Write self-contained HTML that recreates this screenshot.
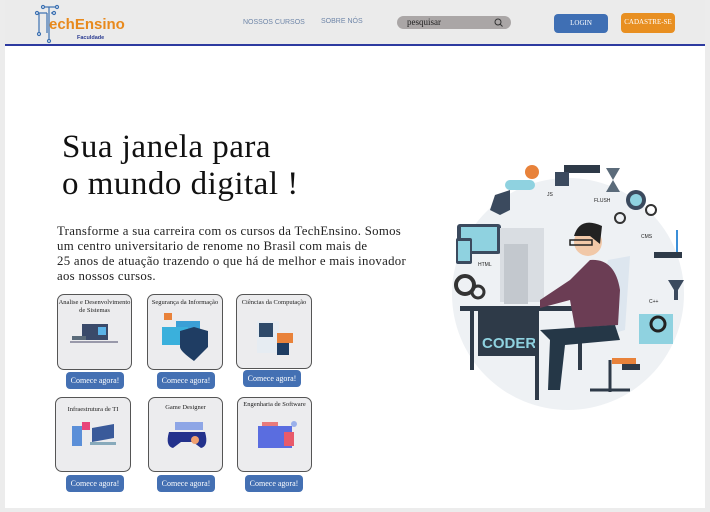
<!DOCTYPE html>
<html><head><meta charset="utf-8"><style>
*{margin:0;padding:0;box-sizing:border-box}
body{width:710px;height:512px;background:#ececec;position:relative;overflow:hidden;font-family:"Liberation Serif",serif}
.page{position:absolute;left:5px;top:0;width:700px;height:508px;background:#fff}
.hdr{position:absolute;left:5px;top:0;width:700px;height:46px;background:#ebebeb;border-bottom:2px solid #2d3aa0}
.abs{position:absolute}
.nav{font-size:7px;color:#6f86a8;font-family:"Liberation Sans",sans-serif}
.search{left:397px;top:16px;width:114px;height:13px;background:#aaa6a6;border-radius:7px;font-size:9px;padding-left:10px;line-height:13px;color:#222}
.btn{background:#3f6fb4;color:#fff;border-radius:4px;text-align:center;font-size:7px}
.title{left:62px;top:129px;font-size:33px;line-height:37px;color:#111;letter-spacing:0.5px}
.para{left:57px;top:224px;font-size:12.8px;line-height:15px;color:#222;white-space:nowrap;letter-spacing:0.3px}
.card{position:absolute;border:1px solid #555;border-radius:7px;background:#ececee;font-size:6.5px;text-align:center;color:#222;padding-top:4px;line-height:8px}
.cb{position:absolute;background:#4470b3;color:#fff;font-size:8px;border-radius:4px;text-align:center;line-height:17px;height:17px;width:58px}
</style></head><body>
<div class="page"></div>
<div class="hdr"></div>
<svg class="abs" style="left:33px;top:3px" width="34" height="42" viewBox="0 0 30 42">
<g stroke="#3a6fb0" stroke-width="1.2" fill="#fff">
<line x1="8" y1="4" x2="22" y2="4"/><line x1="14" y1="4" x2="14" y2="38"/><line x1="2" y1="10" x2="12" y2="10"/><line x1="12" y1="10" x2="12" y2="30"/><line x1="16" y1="10" x2="18" y2="10"/><line x1="4" y1="10" x2="4" y2="30"/>
<circle cx="8" cy="4" r="1.5"/><circle cx="22" cy="4" r="1.5"/><circle cx="2" cy="10" r="1.5"/><circle cx="19" cy="10" r="1.5"/><circle cx="4" cy="31" r="1.5"/><circle cx="14" cy="38" r="1.5"/></g></svg>
<div class="abs" style="left:49px;top:16px;font:bold 15px 'Liberation Sans',sans-serif;color:#e8891c">echEnsino</div>
<div class="abs" style="left:77px;top:35px;font:bold 5.5px 'Liberation Sans',sans-serif;color:#2a3a90">Faculdade</div>
<div class="abs nav" style="left:243px;top:19px">NOSSOS CURSOS</div>
<div class="abs nav" style="left:321px;top:18px">SOBRE NÓS</div>
<div class="abs search">pesquisar<svg style="position:absolute;right:8px;top:2px" width="9" height="9"><circle cx="4" cy="4" r="3" fill="none" stroke="#333"/><line x1="6" y1="6" x2="8.5" y2="8.5" stroke="#333"/></svg></div>
<div class="abs btn" style="left:554px;top:14px;width:54px;height:19px;line-height:19px">LOGIN</div>
<div class="abs btn" style="left:621px;top:13px;width:54px;height:20px;line-height:18px;background:#e88f21">CADASTRE-SE</div>
<div class="abs title">Sua janela para<br>o mundo digital !</div>
<div class="abs para">Transforme a sua carreira com os cursos da TechEnsino. Somos<br>um centro universitario de renome no Brasil com mais de<br>25 anos de atuação trazendo o que há de melhor e mais inovador<br>aos nossos cursos.</div>

<div class="card" style="left:57px;top:294px;width:75px;height:76px">Analise e Desenvolvimento<br>de Sistemas
<svg style="position:absolute;left:12px;top:28px" width="50" height="22"><rect x="12" y="1" width="26" height="16" fill="#3a4a6a"/><rect x="28" y="4" width="8" height="8" fill="#5ab3e8"/><rect x="2" y="13" width="14" height="4" fill="#5b6b7a"/><rect x="0" y="18" width="48" height="2" fill="#99a"/></svg></div>
<div class="cb" style="left:66px;top:372px">Comece agora!</div>
<div class="card" style="left:147px;top:294px;width:76px;height:76px">Segurança da Informação
<svg style="position:absolute;left:12px;top:14px" width="52" height="56"><rect x="16" y="12" width="24" height="14" fill="#3b9fd6"/><rect x="2" y="18" width="26" height="18" fill="#3ab0dc"/><path d="M20 22 L34 18 L48 22 L48 38 Q34 52 34 52 Q20 42 20 38 Z" fill="#1f3d63"/><rect x="4" y="4" width="8" height="7" fill="#e9823a"/></svg></div>
<div class="cb" style="left:157px;top:372px">Comece agora!</div>
<div class="card" style="left:236px;top:294px;width:76px;height:75px">Ciências da Computação
<svg style="position:absolute;left:16px;top:22px" width="46" height="42"><rect x="4" y="4" width="22" height="32" fill="#e6ecf2"/><rect x="6" y="6" width="14" height="14" fill="#2e4a6a"/><rect x="24" y="16" width="16" height="10" fill="#e9823a"/><rect x="24" y="26" width="12" height="12" fill="#1f3d63"/></svg></div>
<div class="cb" style="left:243px;top:370px">Comece agora!</div>
<div class="card" style="left:55px;top:397px;width:76px;height:75px;padding-top:8px">Infraestrutura de TI
<svg style="position:absolute;left:14px;top:22px" width="48" height="28"><rect x="2" y="6" width="10" height="20" fill="#5b8fd8"/><rect x="12" y="2" width="8" height="8" fill="#e8457a"/><path d="M22 8 L44 4 L44 18 L22 22Z" fill="#3a5a9a"/><rect x="20" y="22" width="26" height="3" fill="#8ab"/></svg></div>
<div class="cb" style="left:66px;top:475px">Comece agora!</div>
<div class="card" style="left:148px;top:397px;width:75px;height:75px;padding-top:6px">Game Designer
<svg style="position:absolute;left:16px;top:24px" width="44" height="28"><rect x="10" y="0" width="28" height="8" fill="#8ea6e6"/><path d="M4 10 H40 Q44 24 36 26 L28 20 H16 L8 26 Q0 24 4 10Z" fill="#23318c"/><circle cx="30" cy="18" r="4" fill="#f0a070"/></svg></div>
<div class="cb" style="left:157px;top:475px">Comece agora!</div>
<div class="card" style="left:237px;top:397px;width:75px;height:75px;padding-top:3px">Engenharia de Software
<svg style="position:absolute;left:16px;top:22px" width="46" height="32"><rect x="4" y="6" width="34" height="22" fill="#5a6de0"/><rect x="30" y="12" width="10" height="14" fill="#e85a6a"/><rect x="8" y="2" width="16" height="4" fill="#e87a7a"/><circle cx="40" cy="4" r="3" fill="#9ab0ea"/></svg></div>
<div class="cb" style="left:245px;top:475px">Comece agora!</div>

<svg class="abs" style="left:440px;top:160px" width="260" height="250" viewBox="0 0 260 250">
<circle cx="128" cy="134" r="116" fill="#eef1f4"/>
<rect x="17" y="64" width="44" height="30" rx="3" fill="#3b4a5e"/><rect x="21" y="67" width="36" height="24" fill="#8fd2e0"/>
<rect x="16" y="78" width="16" height="26" rx="2" fill="#3b4a5e"/><rect x="18" y="81" width="12" height="20" fill="#8fd2e0"/>
<circle cx="25" cy="125" r="9" fill="none" stroke="#333" stroke-width="4"/><circle cx="38" cy="132" r="6" fill="none" stroke="#333" stroke-width="3"/>
<rect x="60" y="68" width="44" height="74" fill="#d9dde2"/><rect x="64" y="84" width="24" height="60" fill="#c3c8ce"/>
<rect x="20" y="146" width="140" height="5" fill="#2e3a48"/>
<rect x="38" y="150" width="58" height="46" fill="#2e3a48"/><text x="42" y="188" font-family="Liberation Sans,sans-serif" font-weight="bold" font-size="15" fill="#8fd2e0">CODER</text>
<rect x="95" y="150" width="4" height="90" fill="#2e3a48"/><rect x="30" y="150" width="4" height="60" fill="#2e3a48"/><rect x="138" y="150" width="4" height="60" fill="#2e3a48"/>
<path d="M168 100 L190 96 L185 170 L150 180 Z" fill="#dde6ef"/>
<path d="M150 100 Q175 98 180 130 L178 165 L135 168 L130 140 L100 148 L100 140 L130 120 Z" fill="#6b3d54"/>
<path d="M100 170 L175 165 L180 180 L125 185 L120 230 L108 230 L110 180 Z" fill="#253747"/>
<circle cx="148" cy="82" r="14" fill="#f1c8a8"/><path d="M134 76 Q140 56 162 66 L160 84 L150 76 Z" fill="#222"/>
<rect x="130" y="80" width="22" height="5" fill="none" stroke="#222" stroke-width="1.5"/>
<path d="M150 230 H190 M170 200 V232" stroke="#2e3a48" stroke-width="3"/>
<circle cx="92" cy="12" r="7" fill="#e8823a"/><rect x="65" y="20" width="30" height="10" rx="5" fill="#8fd2e0"/>
<rect x="124" y="5" width="36" height="8" fill="#2e3a48"/><rect x="115" y="12" width="14" height="14" fill="#3b4a5e"/>
<path d="M55 35 L70 30 L70 50 L60 55 L50 50Z" fill="#3b4a5e"/>
<path d="M166 8 H180 L173 20 L180 32 H166 L173 20Z" fill="#5b6b7a"/>
<circle cx="196" cy="40" r="10" fill="#3b4a5e"/><circle cx="196" cy="40" r="6" fill="#8fd2e0"/><circle cx="180" cy="58" r="5" fill="none" stroke="#333" stroke-width="2"/><circle cx="211" cy="50" r="5" fill="none" stroke="#333" stroke-width="2"/>
<rect x="214" y="92" width="28" height="6" fill="#2e3a48"/><rect x="236" y="70" width="2" height="22" fill="#3b8fd8"/>
<path d="M228 120 H244 L238 130 V140 H234 V130Z" fill="#3b4a5e"/>
<rect x="199" y="154" width="34" height="30" fill="#8fd2e0"/><circle cx="218" cy="164" r="7" fill="none" stroke="#222" stroke-width="3"/>
<rect x="172" y="198" width="24" height="6" fill="#e8823a"/><rect x="182" y="204" width="18" height="6" fill="#2e3a48"/>
<g font-family="Liberation Sans,sans-serif" font-size="5" fill="#222"><text x="107" y="36">JS</text><text x="154" y="42">FLUSH</text><text x="201" y="78">CMS</text><text x="38" y="106">HTML</text><text x="209" y="143">C++</text></g>
</svg>
</body></html>
